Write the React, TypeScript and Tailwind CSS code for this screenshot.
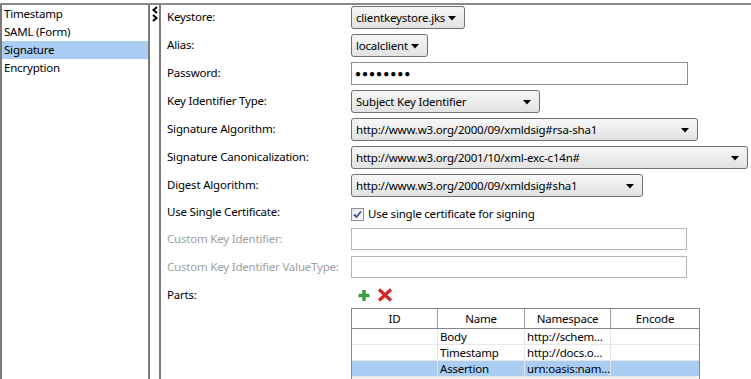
import React from 'react'

const items = ['Timestamp', 'SAML (Form)', 'Signature', 'Encryption']

function Arrow() {
  return (
    <svg width="8" height="5" viewBox="0 0 8 5" className="absolute right-[8px] top-[9px]">
      <path d="M0 0 H8 L4 4.5 Z" fill="#000" />
    </svg>
  )
}

function Combo({ value, width }: { value: string; width: string }) {
  return (
    <div
      className={`relative h-[23px] ${width} rounded-[3px] border border-[#707070] bg-linear-to-b from-[#f7f7f7] to-[#e2e2e2] pl-[4px] leading-[21px]`}
    >
      {value}
      <Arrow />
    </div>
  )
}

function Row({ label, muted, children, h = 'h-[22px]', mb = 'mb-[6px]' }: { label: string; muted?: boolean; children?: React.ReactNode; h?: string; mb?: string }) {
  return (
    <div className={`flex items-center ${h} ${mb}`}>
      <div className={`w-[190px] pl-[6px] shrink-0 whitespace-nowrap ${muted ? 'text-[#a0a0a0]' : 'text-black'}`}>{label}</div>
      {children}
    </div>
  )
}

export default function App() {
  return (
    <div className="w-[751px] h-[379px] overflow-hidden bg-white pt-[3px] font-['Noto_Sans',sans-serif] text-[11.5px] tracking-[-0.2px] text-black">
      <div className="flex h-[376px] border-t-2 border-[#8a8a8a]">
        {/* left list */}
        <div className="w-[150px] shrink-0 border-x-2 border-[#7a7a7a]">
          {items.map((it) => (
            <div
              key={it}
              className={`h-[18px] pl-[2px] leading-[18px] ${it === 'Signature' ? 'bg-[#aacdf3]' : ''}`}
            >
              {it}
            </div>
          ))}
        </div>

        {/* splitter */}
        <div className="w-[9px] shrink-0 pt-[1px] pl-[2px]">
          <svg width="6" height="16" viewBox="0 0 6 16">
            <path d="M5 1 L1.5 4 L5 7" fill="none" stroke="#000" strokeWidth="2" />
            <path d="M1 9 L4.5 12 L1 15" fill="none" stroke="#000" strokeWidth="2" />
          </svg>
        </div>

        {/* right form */}
        <div className="flex-1 border-l-2 border-[#7a7a7a] pt-[1px]">
          <Row label="Keystore:">
            <Combo value="clientkeystore.jks" width="w-[114px]" />
          </Row>
          <Row label="Alias:">
            <Combo value="localclient" width="w-[77px]" />
          </Row>
          <Row label="Password:">
            <div className="h-[23px] w-[337px] border border-[#8e8e8e] pl-[3px] flex items-center text-[10px] tracking-[1px]">
              ●●●●●●●●
            </div>
          </Row>
          <Row label="Key Identifier Type:">
            <Combo value="Subject Key Identifier" width="w-[189px]" />
          </Row>
          <Row label="Signature Algorithm:">
            <Combo value="http://www.w3.org/2000/09/xmldsig#rsa-sha1" width="w-[347px]" />
          </Row>
          <Row label="Signature Canonicalization:">
            <Combo value="http://www.w3.org/2001/10/xml-exc-c14n#" width="w-[397px]" />
          </Row>
          <Row label="Digest Algorithm:">
            <Combo value="http://www.w3.org/2000/09/xmldsig#sha1" width="w-[292px]" />
          </Row>
          <Row label="Use Single Certificate:" h="h-[20px]">
            <div className="flex items-center pt-[4px]">
              <div className="w-[13px] h-[13px] border border-[#8f8f8f] bg-linear-to-br from-[#e6e6e6] to-white flex items-center justify-center">
                <svg width="9" height="9" viewBox="0 0 9 9">
                  <path d="M1 4.5 L3.5 7 L8 1.5" fill="none" stroke="#3a559a" strokeWidth="1.8" />
                </svg>
              </div>
              <span className="ml-[4px]">Use single certificate for signing</span>
            </div>
          </Row>
          <Row label="Custom Key Identifier:" muted>
            <div className="h-[22px] w-[336px] border border-[#b5b5b5]" />
          </Row>
          <Row label="Custom Key Identifier ValueType:" muted>
            <div className="h-[22px] w-[336px] border border-[#b5b5b5]" />
          </Row>
          <Row label="Parts:" mb="mb-0">
            <div className="flex items-center gap-[6px] pl-[6px]">
              <svg width="14" height="13" viewBox="0 0 14 13">
                <path d="M7 1 V12 M1.5 6.5 H12.5" stroke="#3c9f3c" strokeWidth="3.4" />
              </svg>
              <svg width="16" height="14" viewBox="0 0 16 14">
                <path d="M2 1.5 L14 12.5 M14 1.5 L2 12.5" stroke="#d42424" strokeWidth="3.2" />
              </svg>
            </div>
          </Row>

          {/* parts table */}
          <div className="ml-[190px] mt-[2px] w-[349px] border border-[#828790]">
            <div className="flex h-[20px] border-b border-[#828790] leading-[19px]">
              <div className="w-[86px] text-center border-r border-[#a0a0a0]">ID</div>
              <div className="w-[87px] text-center border-r border-[#a0a0a0]">Name</div>
              <div className="w-[86px] text-center border-r border-[#a0a0a0]">Namespace</div>
              <div className="flex-1 text-center">Encode</div>
            </div>
            {[
              ['Body', 'http://schem...'],
              ['Timestamp', 'http://docs.o...'],
              ['Assertion', 'urn:oasis:nam...'],
            ].map(([n, ns], i) => (
              <div
                key={n}
                className={`flex h-[16px] leading-[15px] border-b border-[#e8e8e8] ${i === 2 ? 'bg-[#aacdf3]' : ''}`}
              >
                <div className="w-[86px] border-r border-[#e3e3e3]" />
                <div className="w-[87px] pl-[2px] border-r border-[#e3e3e3]">{n}</div>
                <div className="w-[86px] pl-[2px] border-r border-[#e3e3e3]">{ns}</div>
                <div className="flex-1" />
              </div>
            ))}
            <div className="h-[16px] bg-[#f2f2f2]" />
          </div>
        </div>
      </div>
    </div>
  )
}
